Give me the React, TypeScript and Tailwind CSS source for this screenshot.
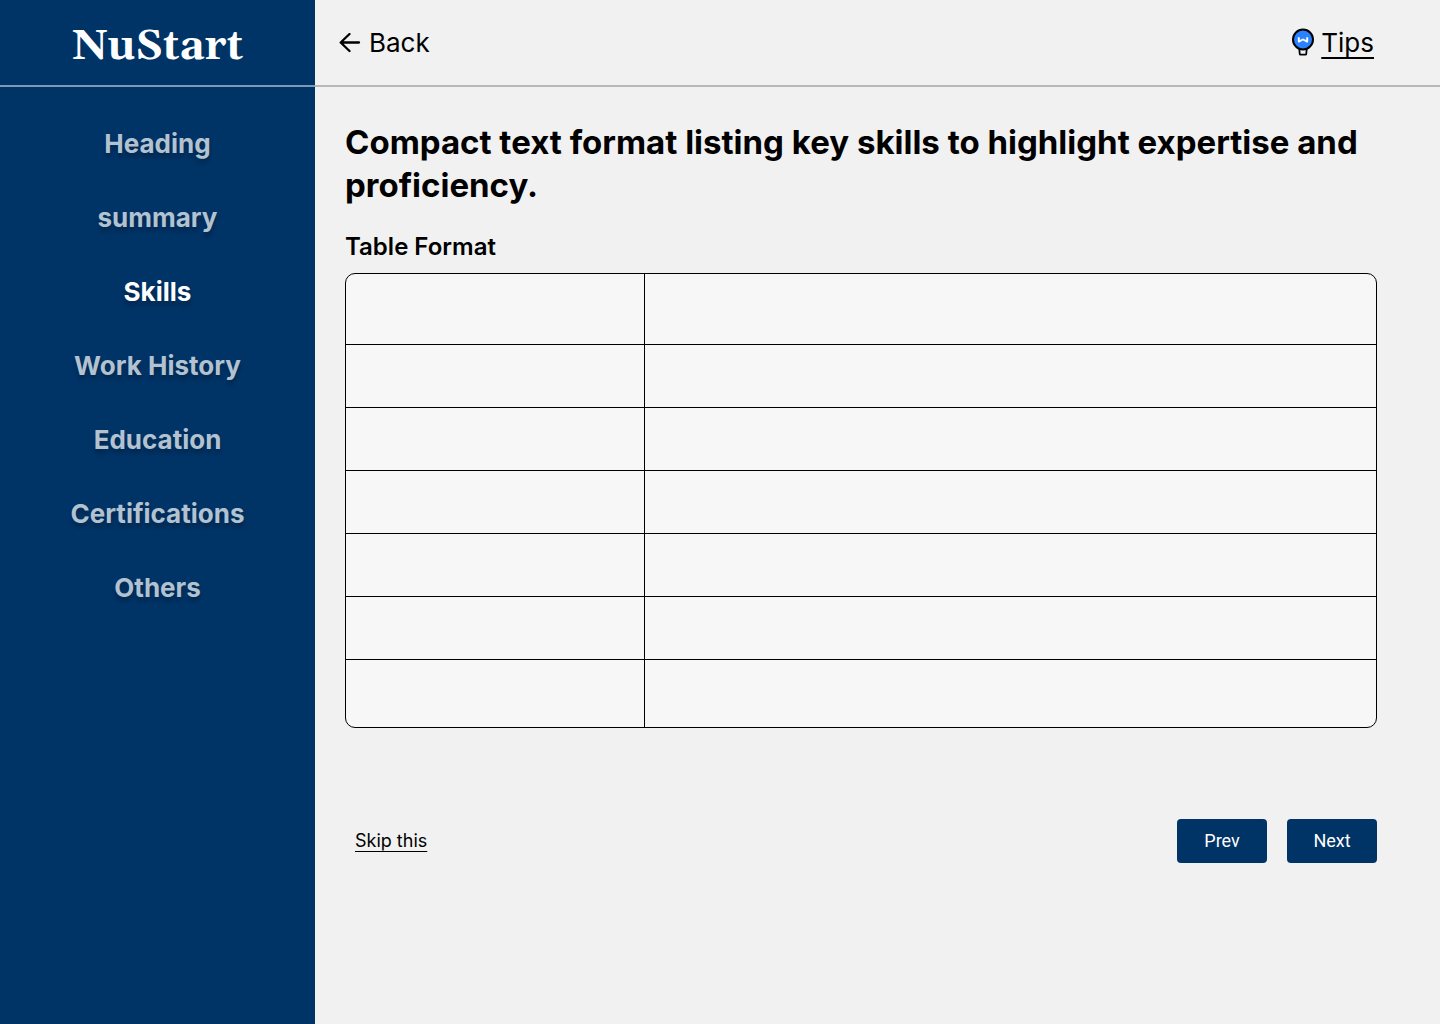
const steps = ["Heading", "summary", "Skills", "Work History", "Education", "Certifications", "Others"];

const rowHeights = ["h-[70px]", "h-[63px]", "h-[63px]", "h-[63px]", "h-[63px]", "h-[63px]", "h-[68px]"];

function ArrowLeft() {
  return (
    <svg width="22" height="20" viewBox="0 0 22 20" fill="none" stroke="currentColor" strokeWidth="2.3" strokeLinecap="round" strokeLinejoin="round" aria-hidden="true">
      <path d="M20 9.500H2M10.500 1 1.700 9.500l8.800 8.500" />
    </svg>
  );
}

function Bulb() {
  return (
    <svg width="24" height="30" viewBox="0 0 24 30" fill="none" aria-hidden="true">
      <path d="M8.300 20.500h7.400l-.4 5.300a1 1 0 0 1-1 .900H9.700a1 1 0 0 1-1-.900z" fill="#f1f1f1" stroke="#000" strokeWidth="1.800" strokeLinejoin="round" />
      <circle cx="12" cy="11.500" r="10" fill="#2b82ff" stroke="#000" strokeWidth="2" />
      <path d="M7.800 9.300v4.300L12 11.500l4.200 2.100V9.300" stroke="#fff" strokeWidth="1.900" strokeLinecap="butt" strokeLinejoin="round" />
    </svg>
  );
}

function Sidebar() {
  return (
    <aside className="w-[315px] shrink-0 bg-[#003366] text-white">
      <div className="flex h-[87px] items-center justify-center border-b-2 border-[#8097b5] pt-2">
        <span className="font-['Gelasio','Georgia','Liberation_Serif',serif] text-[42px] leading-none font-bold">NuStart</span>
      </div>
      <nav className="flex flex-col items-center gap-10 pt-10">
        {steps.map((step) => (
          <a
            key={step}
            href="#"
            aria-current={step === "Skills" ? "step" : undefined}
            className={
              step === "Skills"
                ? "text-[26px] leading-[34px] font-bold text-white [text-shadow:0_4px_4px_rgba(0,0,0,0.25)]"
                : "text-[26px] leading-[34px] font-bold text-[#b2c2d1] [text-shadow:0_4px_4px_rgba(0,0,0,0.25)]"
            }
          >
            {step}
          </a>
        ))}
      </nav>
    </aside>
  );
}

export default function App() {
  return (
    <div className="flex min-h-screen bg-[#f1f1f1] font-['Inter',sans-serif] text-black">
      <Sidebar />
      <div className="min-w-0 flex-1">
        <header className="flex h-[87px] items-center justify-between border-b-2 border-[#b8b8b8] pr-[66px] pl-6">
          <button type="button" className="flex items-center gap-2 text-[26px] leading-[34px]">
            <ArrowLeft />
            Back
          </button>
          <a href="#" className="flex items-center gap-1.5 text-[26px] leading-[34px]">
            <Bulb />
            <span className="underline decoration-2 underline-offset-[5px] [text-decoration-skip-ink:none]">Tips</span>
          </a>
        </header>
        <main className="pt-[34px] pr-[63px] pl-[30px]">
          <h1 className="text-[33px] leading-[43px] font-bold">
            Compact text format listing key skills to highlight expertise and proficiency.
          </h1>
          <h2 id="table-title" className="mt-[25px] text-[24px] leading-[30px] font-semibold">
            Table Format
          </h2>
          <div className="mt-[11px] overflow-hidden rounded-[10px] border border-black bg-[#f7f7f7]">
            <table aria-labelledby="table-title" className="w-full table-fixed border-collapse">
              <colgroup>
                <col className="w-[29%]" />
                <col />
              </colgroup>
              <tbody className="divide-y divide-black">
                {rowHeights.map((height, i) => (
                  <tr key={i} className={height}>
                    <td className="border-r border-black" />
                    <td />
                  </tr>
                ))}
              </tbody>
            </table>
          </div>
          <div className="mt-[91px] flex items-center justify-between pl-[10px]">
            <a href="#" className="text-[18px] leading-6 underline decoration-1 underline-offset-4 [text-decoration-skip-ink:none]">
              Skip this
            </a>
            <div className="flex gap-5 font-['Roboto',sans-serif] text-[18px] text-white">
              <button type="button" className="h-11 w-[90px] rounded bg-[#003366] pb-0.5">Prev</button>
              <button type="button" className="h-11 w-[90px] rounded bg-[#003366] pb-0.5">Next</button>
            </div>
          </div>
        </main>
      </div>
    </div>
  );
}
